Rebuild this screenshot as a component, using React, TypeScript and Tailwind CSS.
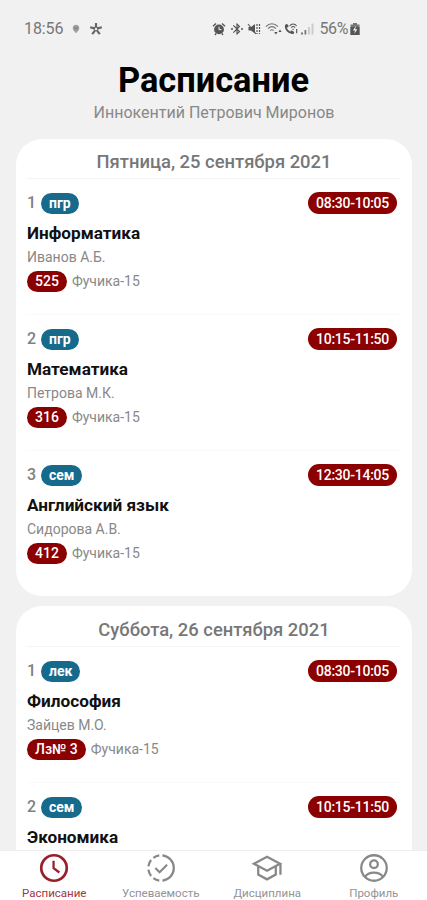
import React, { useState } from 'react';
import { MdBluetooth } from 'react-icons/md';

type Lesson = {
  number: number;
  kind: string;
  time: string;
  title: string;
  teacher?: string;
  room?: string;
  building?: string;
};

type Day = { date: string; lessons: Lesson[] };

const days: Day[] = [
  {
    date: 'Пятница, 25 сентября 2021',
    lessons: [
      { number: 1, kind: 'пгр', time: '08:30-10:05', title: 'Информатика', teacher: 'Иванов А.Б.', room: '525', building: 'Фучика-15' },
      { number: 2, kind: 'пгр', time: '10:15-11:50', title: 'Математика', teacher: 'Петрова М.К.', room: '316', building: 'Фучика-15' },
      { number: 3, kind: 'сем', time: '12:30-14:05', title: 'Английский язык', teacher: 'Сидорова А.В.', room: '412', building: 'Фучика-15' },
    ],
  },
  {
    date: 'Суббота, 26 сентября 2021',
    lessons: [
      { number: 1, kind: 'лек', time: '08:30-10:05', title: 'Философия', teacher: 'Зайцев М.О.', room: 'Лз№ 3', building: 'Фучика-15' },
      { number: 2, kind: 'сем', time: '10:15-11:50', title: 'Экономика' },
    ],
  },
];

type IconProps = { className?: string };

function ClockIcon({ className }: IconProps) {
  return (
    <svg viewBox="0 0 24 24" fill="none" stroke="currentColor" strokeWidth="1.9" className={className}>
      <circle cx="12" cy="12" r="9" />
      <path d="M11.7 6.8V12.2L15.8 15.2" strokeWidth="1.6" />
    </svg>
  );
}

function ProgressCheckIcon({ className }: IconProps) {
  return (
    <svg viewBox="0 0 24 24" fill="none" stroke="currentColor" strokeWidth="1.6" className={className}>
      <path d="M13 3.05A9 9 0 0 1 13 20.95" />
      <path d="M10.8 3.08A9 9 0 0 0 6.6 4.8M5 6.4A9 9 0 0 0 3.1 10.8M3.1 13.2A9 9 0 0 0 5 17.6M6.6 19.2A9 9 0 0 0 10.8 20.92" />
      <path d="M8 12L11 15L16.3 9.7" strokeWidth="1.5" />
    </svg>
  );
}

function SchoolIcon({ className }: IconProps) {
  return (
    <svg viewBox="0 0 24 24" fill="none" stroke="currentColor" strokeWidth="1.6" className={className}>
      <path d="M2.8 9L12 4L21.2 9L12 14Z" />
      <path d="M5.8 10.8V16.6L12 20L18.2 16.6V10.8M21.5 8.8V16.8" />
    </svg>
  );
}

function ProfileIcon({ className }: IconProps) {
  return (
    <svg viewBox="0 0 24 24" fill="none" stroke="currentColor" strokeWidth="1.6" className={className}>
      <circle cx="12" cy="12" r="9" />
      <circle cx="12" cy="9.3" r="2.7" />
      <path d="M5.8 18.2C7 16 9.4 15.3 12 15.3C14.6 15.3 17 16 18.2 18.2" />
    </svg>
  );
}

const tabs = [
  { id: 'schedule', label: 'Расписание', icon: ClockIcon },
  { id: 'progress', label: 'Успеваемость', icon: ProgressCheckIcon },
  { id: 'courses', label: 'Дисциплина', icon: SchoolIcon },
  { id: 'profile', label: 'Профиль', icon: ProfileIcon },
];

function StatusBar() {
  return (
    <div className="flex h-14 shrink-0 items-center pl-6 pr-[67px] pt-px text-[#777]">
      <span className="text-[16px] tracking-[-0.1px]">18:56</span>
      <svg viewBox="0 0 8 10" className="ml-[9px] h-[10px] w-2" fill="#a0a0a0">
        <path d="M4 .8C6 .8 7.3 2.2 7.3 4C7.3 6 5.5 7.8 4 9.2C2.5 7.8 .7 6 .7 4C.7 2.2 2 .8 4 .8Z" />
        <path d="M2 3.2L5.8 5.4M5.8 3L2.2 5.5" stroke="#777" strokeWidth=".8" />
      </svg>
      <svg viewBox="0 0 14 14" className="ml-[9px] size-[14px]" fill="none" stroke="#666" strokeWidth="2.2">
        <path d="M7 1V5M1.2 5.2L5.2 6.4M12.8 5.2L8.8 6.4M3.2 12.2L5.8 8.8M10.8 12.2L8.2 8.8" />
        <circle cx="7" cy="7" r="1.8" strokeWidth="1.2" />
      </svg>

      <div className="ml-auto flex items-center text-[#555]">
        {/* alarm */}
        <svg viewBox="0 0 14 14" className="size-[14px]">
          <path d="M1 4.2L4 1.5M13 4.2L10 1.5M3 13L4.2 11.4M11 13L9.8 11.4" stroke="currentColor" strokeWidth="1.4" />
          <circle cx="7" cy="7.4" r="4.9" fill="currentColor" />
          <path d="M7 4.7V7.6H9.4" fill="none" stroke="#f1f1f1" />
        </svg>
        <span className="ml-[3px] flex w-[15px] items-center justify-center">
          <span className="size-[2px] rounded-full bg-current" />
          <MdBluetooth className="-mx-[3px] size-[14px]" />
          <span className="size-[2px] rounded-full bg-current" />
        </span>
        {/* sound off, vibrate */}
        <svg viewBox="0 0 14 14" className="ml-[3px] size-[14px]" stroke="currentColor">
          <path d="M1.5 5H4L8 2V11.5L4 8.5H1.5Z" fill="currentColor" stroke="none" />
          <path d="M1 2L9 12" strokeWidth="1.1" />
          <path d="M10 2V12M12.5 2V12" strokeWidth="1.2" strokeDasharray="2 1" />
        </svg>
        {/* wifi */}
        <svg viewBox="0 0 17 14" className="ml-1 h-[14px] w-[17px]" fill="none" stroke="#777">
          <path d="M.8 4.6C4.3 .8 9.6 .8 13 4.6M3 6.6C5.4 4 8.5 4 10.9 6.6M5.2 8.6C6.3 7.5 7.6 7.5 8.7 8.6" strokeWidth="1.1" />
          <path d="M9.2 10H12.6L10.9 12.4ZM13.4 10H16.6L15 7.6Z" fill="#555" stroke="none" />
        </svg>
        {/* wifi calling */}
        <svg viewBox="0 0 16 14" className="ml-[2px] h-[14px] w-[15px]" fill="none" stroke="currentColor">
          <path d="M2.4 2.5C.6 6.8 5.2 12 10 11.4" strokeWidth="2" />
          <path d="M2.2 2.2L4.2 4.8M7 9.5L10.4 11.4" strokeWidth="2.5" />
          <path d="M6 3.8C8 1 11.5 1 13.5 3.8M7.7 5.5C9 4 10.5 4 11.8 5.5" strokeWidth="1.1" />
          <path d="M9.8 6.8V8M13.5 7V11.5" strokeWidth="1.2" />
        </svg>
        {/* signal strength */}
        <svg viewBox="0 0 13 14" className="ml-[2px] h-[14px] w-[13px]">
          <path d="M0 10.5H2V12.5H0ZM3.5 8H5.3V12.5H3.5Z" fill="#777" />
          <path d="M7 5H9V12.5H7ZM10.5 1.5H12.5V12.5H10.5Z" fill="#ccc" />
        </svg>
        <span className="ml-[5px] text-[16px] tracking-[-0.4px] text-[#777]">56%</span>
        {/* battery */}
        <svg viewBox="0 0 10 14" className="ml-[2px] h-[14px] w-[10px]">
          <path d="M3 1H7V2.5H9.5V13H.5V2.5H3Z" fill="#777" />
          <path d="M.5 5H9.5V13H.5Z" fill="currentColor" />
          <path d="M5.8 3.8L3 8.5H5L4.4 11.8L7.3 7.2H5.3Z" fill="#f1f1f1" />
        </svg>
      </div>
    </div>
  );
}

function LessonItem({ lesson }: { lesson: Lesson }) {
  return (
    <li className="border-t border-[#fafafa] pt-[13px] first:border-[#f4f4f4] not-last:h-[136px]">
      <div className="flex h-[22px] items-center">
        <span className="w-[14px] text-[16px] font-medium text-[#808080]">{lesson.number}</span>
        <span className="flex h-[21px] items-center rounded-full bg-[#166a8c] px-2 text-[14px] font-bold text-white">
          {lesson.kind}
        </span>
        <span className="ml-auto mr-1 flex h-[22px] w-[89px] items-center justify-center rounded-full bg-[#8b0000] text-[14px] font-medium tracking-[-0.25px] text-white">
          {lesson.time}
        </span>
      </div>
      <h3 className="mt-[7px] text-[17.2px] font-bold leading-6 text-[#111]">{lesson.title}</h3>
      {lesson.teacher && <p className="mt-[2px] text-[14px] leading-5 text-[#888]">{lesson.teacher}</p>}
      {lesson.room && (
        <div className="mt-1 flex items-center">
          <span className="flex h-[21px] items-center rounded-full bg-[#8b0000] px-2 text-[14px] font-medium text-white">
            {lesson.room}
          </span>
          <span className="ml-[5px] text-[14px] text-[#888]">{lesson.building}</span>
        </div>
      )}
    </li>
  );
}

export default function App() {
  const [activeTab, setActiveTab] = useState('schedule');

  return (
    <div className="flex h-[900px] w-full flex-col overflow-hidden bg-[#f1f1f1] font-[Roboto,sans-serif]">
      <StatusBar />

      <header className="shrink-0 text-center">
        <h1 className="mt-[4px] text-[34.4px] font-bold leading-10 text-black">Расписание</h1>
        <p className="mt-[3px] pl-px text-[16px] leading-5 text-[#888]">Иннокентий Петрович Миронов</p>
      </header>

      <main className="mt-4 flex min-h-0 flex-1 flex-col gap-[10px] overflow-hidden pl-4 pr-[15px]">
        {days.map((day) => (
          <section
            key={day.date}
            className="shrink-0 rounded-[26px] bg-white px-[11px] pb-[10px] last:grow last:rounded-b-none last:pb-0 last:pt-px"
          >
            <h2 className="h-[39px] pt-[11px] text-center text-[18.4px] font-medium leading-6 text-[#777]">{day.date}</h2>
            <ul className={day.lessons.length > 2 ? 'h-[408px]' : ''}>
              {day.lessons.map((lesson) => (
                <LessonItem key={lesson.number} lesson={lesson} />
              ))}
            </ul>
          </section>
        ))}
      </main>

      <nav className="grid h-[50px] shrink-0 grid-cols-4 border-t border-[#eee] bg-white pl-px">
        {tabs.map((tab) => {
          const Icon = tab.icon;
          return (
            <button
              key={tab.id}
              onClick={() => setActiveTab(tab.id)}
              className={`flex flex-col items-center ${activeTab === tab.id ? 'text-[#98202a]' : 'text-[#888]'}`}
            >
              <Icon className="size-[34px] shrink-0" />
              <span className="mt-[2px] text-[11.5px] leading-[13px] opacity-90">{tab.label}</span>
            </button>
          );
        })}
      </nav>
    </div>
  );
}
